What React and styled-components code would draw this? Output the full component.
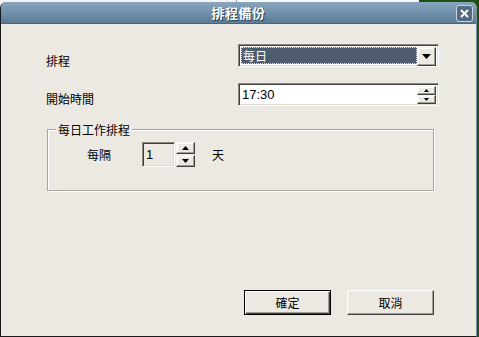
import React from "react";
import styled, { createGlobalStyle } from "styled-components";

const Global = createGlobalStyle`
  html, body { margin: 0; padding: 0; }
  body {
    width: 479px; height: 337px; overflow: hidden;
    background: linear-gradient(to right, #f4f4f4 0, #f4f4f4 236px, #9a9a9a 236px, #9a9a9a 237px, #f8f8f8 237px, #f8f8f8 419px, #1f4f12 419px);
    font-family: "Noto Sans CJK TC", "Liberation Sans", sans-serif;
    font-size: 12px;
    color: #000;
  }
`;

const Window = styled.div`
  margin-top: 2px;
  width: 477px;
  height: 335px;
  display: flex;
  flex-direction: column;
  border-radius: 6px 6px 0 0;
  overflow: hidden;
  background: #ece9e3;
  border-left: 1px solid #1a1a1a;
  border-bottom: 1px solid #1a1a1a;
  border-right: 1px solid #7b8fa0;
  box-sizing: border-box;
`;

const TitleBar = styled.div`
  height: 21px;
  flex: none;
  display: flex;
  align-items: center;
  justify-content: center;
  position: relative;
  background: linear-gradient(to bottom, #8aa6bd 0%, #7796b1 35%, #6a89a5 70%, #5b7a94 100%);
  border-bottom: 1px solid #4e6478;
`;

const Title = styled.span`
  color: #fff;
  font-weight: bold;
  font-size: 13px;
  letter-spacing: 0.5px;
  text-shadow: 1px 1px 0 #2e3e4c;
`;

const CloseBtn = styled.div`
  position: absolute;
  right: 3px;
  top: 3px;
  width: 15px;
  height: 15px;
  border: 1px solid #c6d3de;
  border-radius: 3px;
  background: #526c84;
  display: flex;
  align-items: center;
  justify-content: center;
`;

const Body = styled.div`
  flex: 1;
  display: flex;
  flex-direction: column;
  padding: 20px 37px 0 45px;
`;

const Row = styled.div`
  display: flex;
  align-items: flex-start;
  height: 23px;
  margin-bottom: ${p => p.$mb || 0}px;
`;

const Label = styled.div`
  width: ${p => p.$w}px;
  flex: none;
  line-height: 17px;
  padding-top: ${p => p.$pt || 0}px;
`;

const Sunken = styled.div`
  box-sizing: border-box;
  width: ${p => p.$w}px;
  height: ${p => p.$h}px;
  border-top: 1px solid #8a877e;
  border-left: 1px solid #8a877e;
  border-right: 1px solid #fff;
  border-bottom: 1px solid #fff;
  box-shadow: inset 1px 1px 0 #3f3f3f, inset -1px -1px 0 #dedbd3;
  background: ${p => p.$bg || "#fff"};
  display: flex;
  align-items: stretch;
  padding: 2px;
`;

const Selected = styled.div`
  flex: 1;
  background: #4f5c70;
  color: #fff;
  outline: 1px dotted #e8e2c8;
  outline-offset: -1px;
  display: flex;
  align-items: center;
  padding-left: 2px;
`;

const Raised = styled.div`
  box-sizing: border-box;
  width: ${p => p.$w}px;
  height: ${p => p.$h}px;
  flex: none;
  background: #ece9e3;
  border-top: 1px solid #f6f5f1;
  border-left: 1px solid #f6f5f1;
  border-right: 1px solid #404040;
  border-bottom: 1px solid #404040;
  box-shadow: inset -1px -1px 0 #a09d95, inset 1px 1px 0 #fff;
  display: flex;
  align-items: center;
  justify-content: center;
`;

const InputText = styled.div`
  flex: 1;
  display: flex;
  align-items: center;
  font-family: "Liberation Sans", sans-serif;
  font-size: 13px;
  padding-left: 1px;
`;

const SpinCol = styled.div`
  display: flex;
  flex-direction: column;
  justify-content: space-between;
  flex: none;
  height: ${p => p.$h || "auto"};
  margin-left: ${p => p.$ml || 0}px;
`;

const Group = styled.fieldset`
  margin: 15px 5px 0 1px;
  padding: 4px 0 23px 0;
  min-width: 0;
  border: 1px solid #a7a59b;
  box-shadow: 1px 1px 0 #fff, inset 1px 1px 0 #fff;
  border-radius: 0;
`;

const Legend = styled.legend`
  padding: 0 2px;
  margin-left: 8px;
  font-size: 12px;
`;

const GroupRow = styled.div`
  display: flex;
  align-items: center;
  height: 25px;
  padding-left: 39px;
`;

const Footer = styled.div`
  margin-top: auto;
  margin-bottom: 21px;
  display: flex;
  justify-content: flex-end;
  gap: 16px;
  padding-right: 5px;
`;

const Button = styled.div`
  box-sizing: border-box;
  width: 87px;
  height: 25px;
  display: flex;
  align-items: center;
  justify-content: center;
  background: #ece9e3;
  border-top: 1px solid ${p => (p.$def ? "#000" : "#fff")};
  border-left: 1px solid ${p => (p.$def ? "#000" : "#fff")};
  border-right: 1px solid ${p => (p.$def ? "#000" : "#404040")};
  border-bottom: 1px solid ${p => (p.$def ? "#000" : "#404040")};
  box-shadow: ${p =>
    p.$def
      ? "inset 1px 1px 0 #fff, inset -1px -1px 0 #404040, inset -2px -2px 0 #a09d95"
      : "inset -1px -1px 0 #a09d95"};
`;

const Unit = styled.span`
  margin-left: 17px;
`;

const Tri = ({ up, size = 7 }) => (
  <svg width={size} height={Math.ceil(size / 2)} viewBox={`0 0 ${size} ${Math.ceil(size / 2)}`}>
    {up ? (
      <polygon points={`0,${Math.ceil(size / 2)} ${size},${Math.ceil(size / 2)} ${size / 2},0`} fill="#000" />
    ) : (
      <polygon points={`0,0 ${size},0 ${size / 2},${Math.ceil(size / 2)}`} fill="#000" />
    )}
  </svg>
);

export default function App() {
  return (
    <>
      <Global />
      <Window>
        <TitleBar>
          <Title>排程備份</Title>
          <CloseBtn>
            <svg width="9" height="9" viewBox="0 0 9 9">
              <path d="M1 1 L8 8 M8 1 L1 8" stroke="#fff" strokeWidth="2" />
            </svg>
          </CloseBtn>
        </TitleBar>
        <Body>
          <Row $mb={16}>
            <Label $w={192} $pt={8}>排程</Label>
            <Sunken $w={203} $h={23} $bg="#fff">
              <Selected>每日</Selected>
              <Raised $w={19} $h={19}>
                <Tri size={9} />
              </Raised>
            </Sunken>
          </Row>
          <Row>
            <Label $w={192} $pt={7}>開始時間</Label>
            <Sunken $w={203} $h={23}>
              <InputText>17:30</InputText>
              <SpinCol>
                <Raised $w={19} $h={9}><Tri up size={5} /></Raised>
                <Raised $w={19} $h={9}><Tri size={5} /></Raised>
              </SpinCol>
            </Sunken>
          </Row>
          <Group>
            <Legend>每日工作排程</Legend>
            <GroupRow>
              <Label $w={55}>每隔</Label>
              <Sunken $w={33} $h={25} $bg="#ece9e3">
                <InputText>1</InputText>
              </Sunken>
              <SpinCol $ml={1} $h="25px">
                <Raised $w={19} $h={12}><Tri up size={7} /></Raised>
                <Raised $w={19} $h={12}><Tri size={7} /></Raised>
              </SpinCol>
              <Unit>天</Unit>
            </GroupRow>
          </Group>
          <Footer>
            <Button $def>確定</Button>
            <Button>取消</Button>
          </Footer>
        </Body>
      </Window>
    </>
  );
}
